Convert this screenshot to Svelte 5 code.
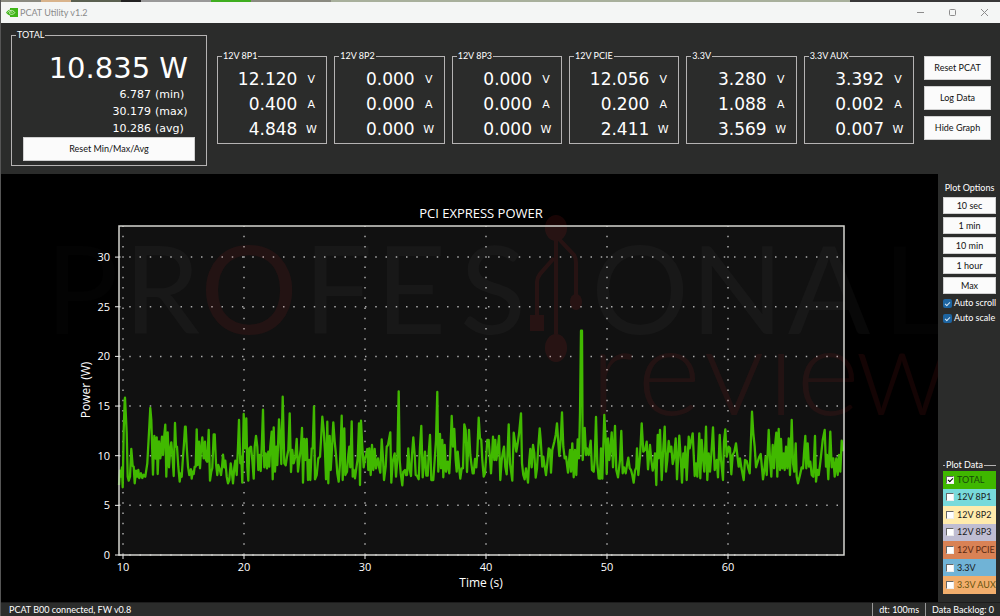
<script>
  const total = { now: '10.835', min: '6.787', max: '30.179', avg: '10.286' };

  const rails = [
    { name: '12V 8P1', volts: '12.120', amps: '0.400', watts: '4.848' },
    { name: '12V 8P2', volts: '0.000', amps: '0.000', watts: '0.000' },
    { name: '12V 8P3', volts: '0.000', amps: '0.000', watts: '0.000' },
    { name: '12V PCIE', volts: '12.056', amps: '0.200', watts: '2.411' },
    { name: '3.3V', volts: '3.280', amps: '1.088', watts: '3.569' },
    { name: '3.3V AUX', volts: '3.392', amps: '0.002', watts: '0.007' }
  ];

  const actions = ['Reset PCAT', 'Log Data', 'Hide Graph'];
  const ranges = ['10 sec', '1 min', '10 min', '1 hour', 'Max'];

  let autoScroll = $state(true);
  let autoScale = $state(true);

  let series = $state([
    { name: 'TOTAL', key: 'sum', on: true },
    { name: '12V 8P1', key: 'p1', on: false },
    { name: '12V 8P2', key: 'p2', on: false },
    { name: '12V 8P3', key: 'p3', on: false },
    { name: '12V PCIE', key: 'pcie', on: false },
    { name: '3.3V', key: 'v3', on: false },
    { name: '3.3V AUX', key: 'aux', on: false }
  ]);

  // axes
  const left = 119, right = 844, top = 52, bottom = 381;
  const xTicks = [10, 20, 30, 40, 50, 60].map((v) => ({ v, x: 123 + (v - 10) * 12.1 }));
  const yTicks = [0, 5, 10, 15, 20, 25, 30].map((v) => ({ v, y: bottom - v * 9.93 }));

  // readings come in blocks, three units to a pixel, each with its own start
  const blocks = [
    { start: 110, data: '27,315 30,272 33,290 36,262 38,322 41,150 44,60 45,53 47,95 50,160 53,290 56,302 60,290 64,207 68,258 71,260 74,310 78,272 82,290 85,270 88,294 93,280 97,294 101,284 106,290 112,250 118,140 121,84 124,120 129,284 133,168 137,236 140,172 143,282 147,184 151,235 156,170 159,225 163,165 166,134 169,290 173,157 177,262 181,205 184,187 188,240 191,288 195,129 198,200 201,200 205,260 209,305 212,280 215,290 219,230 222,190 225,140 227,140 230,200 234,260 238,285 243,268 245,296 248,275 251,282 254,260 257,260 260,148 263,255 267,185 270,265 273,210 277,172 281,235 285,185 288,240 292,245 296,150 300,302 304,275 307,265 311,163 314,163 318,250 322,285 325,255 329,268 333,285 336,262 339,224 343,262 346,242 350,290 354,310 358,300 362,250 366,280 369,310 373,262 376,242 380,285 384,200 387,120 391,250 394,230 397,308 401,102 405,205 409,115 412,260 415,302 418,205 423,200 427,240 431,296 434,200 438,168 442,200 445,270 449,225 452,273 456,180 459,89 463,262 467,220 471,265 475,215 478,260 481,200 485,155 488,298 491,142 495,275 499,200 502,255 507,118 511,180 514,252 518,50 523,250 527,256 531,230 535,210 539,100 543,276 547,210 551,250 556,230 560,177 564,275 568,240 572,210 576,144 579,308 583,177 586,240 590,177 594,300 598,240 601,300 605,205 608,205 612,79 615,298 620,285 625,235 630,230 633,180 637,110 641,150 645,215 648,298 652,125 655,310 659,168 662,270 666,205 670,127 674,185 678,225 682,280 686,305 690,250 695,107 698,300 703,145 706,285 711,275 715,225 718,200 721,262 725,124 728,290 731,270 735,295 739,265 743,235 747,130 750,315' },
    { start: 350, data: '33,122 37,200 41,262 45,235 48,225 52,207 55,270 58,205 62,285 66,195 70,270 74,207 78,265 84,235 88,265 91,278 95,178 99,235 102,300 107,260 110,200 114,195 121,157 124,308 128,245 134,220 138,290 142,240 146,34 149,240 152,280 157,316 160,275 165,270 168,285 171,285 175,205 179,270 183,288 186,225 190,172 194,225 197,285 201,287 206,298 210,200 214,138 218,292 225,215 229,287 233,287 236,220 240,165 244,300 250,300 254,240 258,180 262,36 265,275 270,162 273,265 277,180 280,292 284,195 288,275 293,245 298,280 301,220 305,108 309,200 313,147 317,240 320,275 323,215 327,260 331,296 335,265 339,265 343,133 347,150 351,276 357,150 361,225 364,250 368,280 371,280 375,237 379,262 382,220 386,113 390,175 394,180 397,240 401,290 405,280 409,225 412,180 416,180 419,225 423,280 429,170 433,240 436,180 439,240 442,220 447,168 451,300 455,240 459,215 462,200 466,260 470,283 476,133 480,250 487,302 491,158 495,185 499,215 503,190 507,162 513,100 516,250 520,285 524,298 528,265 534,308 538,240 541,207 545,262 549,195 553,220 557,293 561,265 565,200 569,145 572,180 577,260 580,230 584,260 588,285 592,250 596,205 600,210 603,278 607,210 613,185 617,165 621,130 624,175 628,228 632,180 636,97 640,200 644,235 648,230 654,278 660,210 663,275 667,190 671,292 675,210 679,285 683,178 687,235 690,100 693,-148 696,-148 698,240 704,144 708,225 711,205 716,225 722,182 726,270 731,275 734,240 738,111 742,250 746,295 750,296' },
    { start: 600, data: '3,205 7,296 10,200 13,105 17,180 20,282 24,175 28,240 31,210 35,157 39,262 45,138 49,270 54,292 60,240 64,153 68,280 72,262 77,280 81,255 85,233 89,265 93,270 97,285 101,308 105,272 109,262 111,205 115,285 120,230 125,130 130,215 135,210 140,185 144,268 150,195 154,240 158,272 162,255 165,220 169,315 173,165 176,235 180,150 185,300 189,220 194,140 198,275 202,240 206,183 210,215 214,200 218,252 222,235 227,175 231,298 238,167 243,250 246,308 250,220 253,262 256,200 260,300 266,170 269,205 273,185 278,160 284,288 288,250 292,290 298,160 301,295 305,180 309,235 313,275 318,140 322,300 326,220 330,275 334,225 339,142 344,270 350,240 354,292 359,165 363,240 369,300 372,185 376,148 380,230 386,200 390,205 394,283 398,225 403,215 408,190 412,225 416,260 420,235 424,262 431,300 435,240 440,243 445,265 449,280 452,200 456,95 460,160 464,200 468,262 473,245 478,230 482,222 485,255 489,298 493,270 497,230 500,285 506,150 510,235 514,290 518,195 522,265 526,190 529,158 532,290 536,147 540,270 543,177 547,265 551,220 554,270 558,200 562,265 566,175 570,285 575,120 579,250 583,275 587,190 590,290 594,310 600,285 605,262 609,265 612,220 616,168 619,265 623,190 627,260 631,245 635,285 640,290 645,168 648,305 652,270 656,285 660,255 664,220 668,180 674,150 678,260 681,225 685,298 691,155 695,262 700,235 704,290 709,235 713,285 717,225 721,275 725,182 729,210 732,210' }
  ];

  const trace = blocks
    .flatMap((b) => b.data.split(' ').map((pair) => {
      const [x, y] = pair.split(',').map(Number);
      return `${(b.start + x / 3).toFixed(1)},${(206 + y / 3).toFixed(1)}`;
    }))
    .join(' ');

  const brand = [
    ['P', 82], ['R', 162], ['O', 249], ['F', 338], ['E', 411], ['S', 493],
    ['O', 640], ['N', 737], ['A', 829], ['L', 914]
  ];
  const tagline = [['r', 612], ['e', 669], ['v', 734], ['ı', 781], ['e', 828], ['w', 902]];
</script>

<div class="window">
  <div class="desktop"></div>
  <header class="titlebar">
    <svg class="logo" viewBox="0 0 12 9" aria-hidden="true">
      <path d="M4 0h8v9H4z" fill="#3fb618" />
      <path d="M0 4.5C2 1.800 4 1 6 1.200 8 1.500 9.500 3 10.500 4.300 9 6.500 7.500 7.600 5.500 7.700 3 7.700 1.200 6.500 0 4.500z" fill="#3fb618" />
      <path d="M1.500 4.500C3 2.500 5 2 6.500 2.600 7.800 3.100 8.500 4 9 4.500 8 5.600 7 6.400 5.500 6.400 4 6.400 3.300 5.300 3.300 4.600 4 3.700 5.500 3.500 6.500 4.700" fill="none" stroke="#e8f7e0" stroke-width=".8" />
    </svg>
    <span class="title">PCAT Utility v1.2</span>
    <button aria-label="Minimize"><svg viewBox="0 0 9 9"><path d="M1 4.500h7" /></svg></button>
    <button aria-label="Maximize"><svg viewBox="0 0 9 9"><rect x="1.500" y="1.500" width="6" height="6" rx="1" /></svg></button>
    <button aria-label="Close"><svg viewBox="0 0 9 9"><path d="M1 1l7 7M8 1L1 8" /></svg></button>
  </header>

  <section class="readings">
    <fieldset class="total">
      <legend>TOTAL</legend>
      <div class="now">{total.now} W</div>
      <div class="stats">
        <span>{total.min}</span><span>(min)</span>
        <span>{total.max}</span><span>(max)</span>
        <span>{total.avg}</span><span>(avg)</span>
      </div>
      <button class="btn reset">Reset Min/Max/Avg</button>
    </fieldset>

    <div class="rails">
      {#each rails as rail}
        <fieldset class="rail">
          <legend>{rail.name}</legend>
          <div class="values">
            <span>{rail.volts}</span><small>V</small>
            <span>{rail.amps}</span><small>A</small>
            <span>{rail.watts}</span><small>W</small>
          </div>
        </fieldset>
      {/each}
    </div>

    <div class="actions">
      {#each actions as action}
        <button class="btn">{action}</button>
      {/each}
    </div>
  </section>

  <main>
    <div class="plot">
      <svg viewBox="1 0 937 428" role="img" aria-label="PCI Express power over time">
        <rect x={left} y={top} width={right - left} height={bottom - top} fill="#111" />

        <g class="grid">
          {#each xTicks as t}
            <line x1={t.x} x2={t.x} y1={bottom} y2={top} />
          {/each}
          {#each yTicks as t}
            <line x1={left} x2={right} y1={t.y} y2={t.y} />
          {/each}
        </g>

        <g class="watermark" aria-hidden="true">
          {#each brand as [letter, x], i}
            <text class:red={i === 2} class:faint={i === 0 || i === 9} {x} y="160" text-anchor="middle">{letter}</text>
          {/each}
          {#each tagline as [letter, x]}
            <text class="red light" {x} y="241" text-anchor="middle">{letter}</text>
          {/each}
          <g class="usb">
            <path d="M556 66v94M558 64l16 17q2 3 2 8v13M554 84l-14 16q-3 4-3 8v33" />
            <ellipse cx="556" cy="54" rx="11" ry="13" />
            <ellipse cx="556" cy="174" rx="11" ry="14" />
            <ellipse cx="576" cy="128" rx="6" ry="8" />
            <path d="M576 98v24" />
            <rect x="530" y="141" width="14" height="16" />
          </g>
        </g>

        {#if series[0].on}
          <polyline class="trace" points={trace} />
        {/if}

        <rect class="frame" x={left} y={top} width={right - left} height={bottom - top} />

        <g class="ticks">
          {#each xTicks as t}
            <line x1={t.x} x2={t.x} y1={bottom} y2={bottom + 4} />
            <text x={t.x} y={bottom + 16} text-anchor="middle">{t.v}</text>
          {/each}
          {#each yTicks as t}
            <line x1={left - 4} x2={left} y1={t.y} y2={t.y} />
            <text x={left - 9} y={t.y + 4} text-anchor="end">{t.v}</text>
          {/each}
        </g>

        <text class="heading" x="481" y="44" text-anchor="middle">PCI EXPRESS POWER</text>
        <text class="axis" x="481" y="413" text-anchor="middle">Time (s)</text>
        <text class="axis" transform="translate(90 216) rotate(-90)" text-anchor="middle">Power (W)</text>
      </svg>
    </div>

    <aside>
      <div class="options">
        <h2>Plot Options</h2>
        {#each ranges as range}
          <button class="btn">{range}</button>
        {/each}
        <label><input type="checkbox" bind:checked={autoScroll} />Auto scroll</label>
        <label><input type="checkbox" bind:checked={autoScale} />Auto scale</label>
      </div>

      <fieldset class="data">
        <legend>Plot Data</legend>
        <div class="series">
          {#each series as item}
            <label class={item.key}><input type="checkbox" bind:checked={item.on} />{item.name}</label>
          {/each}
        </div>
      </fieldset>
    </aside>
  </main>

  <footer>
    <span class="status">PCAT B00 connected, FW v0.8</span>
    <span class="cell">dt: 100ms</span>
    <span class="cell">Data Backlog: 0</span>
  </footer>
</div>

<style>
  :global(body) {
    background: #2b2c2b;
  }
  .window {
    box-sizing: border-box;
    display: flex;
    flex-direction: column;
    min-height: 100vh;
    border-left: 1px solid #555;
    background: #2b2c2b;
    color: #fff;
    font-family: Lato, "Open Sans", sans-serif;
    font-size: 9px;
    line-height: 12px;
  }
  .desktop {
    height: 2px;
    background: linear-gradient(90deg, #8a8a80 0 4%, #d9b48c 4% 7%, #5a6050 7% 12%, #222 12% 14%, #999 14% 21%, #3fae20 21% 25%, #8a8a80 25% 33%, #a8b09c 33% 85%, #383838 85%);
  }
  button {
    font: inherit;
    padding: 0;
    cursor: pointer;
  }
  fieldset {
    box-sizing: border-box;
    min-width: 0;
    margin: 0;
    border: 1px solid #b5b3b3;
  }
  legend {
    padding: 0 1px;
    line-height: 12px;
  }
  .btn {
    border: 1px solid #d0d0d0;
    background: #fbfbfb;
    color: #111;
  }

  .titlebar {
    display: flex;
    align-items: center;
    height: 21px;
    padding-left: 5px;
    background: #f4f6f5;
    color: #8b8b8b;
  }
  .logo {
    width: 12px;
    height: 9px;
    margin-right: 2px;
  }
  .title {
    flex: 1;
  }
  .titlebar button {
    display: flex;
    align-items: center;
    justify-content: center;
    width: 32px;
    height: 20px;
    border: 0;
    background: none;
  }
  .titlebar button svg {
    width: 9px;
    height: 9px;
    fill: none;
    stroke: #8c8c8c;
  }

  .readings {
    display: flex;
    align-items: flex-start;
    gap: 10px;
    padding: 6px 9px 8px 10px;
  }
  .total {
    width: 196px;
    height: 137px;
    padding: 0 11px;
  }
  .total legend {
    margin-left: -7px;
  }
  .now, .stats, .values {
    font-family: "DejaVu Sans", Verdana, sans-serif;
  }
  .now {
    padding-right: 7px;
    font-size: 29px;
    line-height: 36px;
    margin-top: 9px;
    text-align: right;
  }
  .stats {
    display: grid;
    grid-template-columns: 1fr 36px;
    column-gap: 4px;
    padding-right: 4px;
    font-size: 11px;
    line-height: 17px;
  }
  .stats span:nth-child(odd) {
    text-align: right;
  }
  .reset {
    width: 100%;
    height: 24px;
  }
  .rails {
    display: flex;
    flex: 1;
    gap: 7px;
    padding-top: 21px;
  }
  .rail {
    flex: 1;
    height: 94px;
    padding: 0 1px 0 4px;
  }
  .values {
    display: grid;
    grid-template-columns: 1fr 28px;
    align-items: center;
    padding-top: 5px;
    font-size: 17px;
    line-height: 25px;
    text-align: right;
  }
  .values small {
    font-size: 11px;
    text-align: center;
  }
  .actions {
    display: flex;
    flex-direction: column;
    gap: 6px;
    width: 67px;
    padding-top: 27px;
  }
  .actions .btn {
    height: 24px;
  }

  main {
    display: flex;
    flex: 1;
  }
  .plot {
    flex: 1;
    min-width: 0;
    background: #000;
    font-family: "Open Sans", "Noto Sans", sans-serif;
  }
  .plot > svg {
    display: block;
    width: 100%;
  }
  .grid line {
    stroke: #aaa;
    stroke-width: 1.5;
    stroke-dasharray: 1.5 8.75;
  }
  .frame {
    fill: none;
    stroke: #d5d5d0;
    stroke-width: 1.5;
  }
  .trace {
    fill: none;
    stroke: #41b900;
    stroke-width: 2.3;
    stroke-linejoin: round;
  }
  .ticks line {
    stroke: #eee;
  }
  .ticks text {
    fill: #fff;
    font-size: 11px;
  }
  .heading {
    fill: #fff;
    font-size: 13px;
  }
  .axis {
    fill: #fff;
    font-size: 12px;
  }
  .watermark text {
    fill: rgba(255, 255, 255, 0.03);
    font-family: Lato, sans-serif;
    font-size: 122px;
  }
  .watermark .faint {
    fill: rgba(255, 255, 255, 0.01);
  }
  .watermark .red {
    fill: rgba(220, 40, 40, 0.09);
  }
  .watermark .light {
    font-weight: 300;
  }
  .usb {
    fill: #dc2828;
    opacity: 0.11;
  }
  .usb path {
    fill: none;
    stroke: #dc2828;
    stroke-width: 4;
  }

  aside {
    display: flex;
    flex-direction: column;
    justify-content: space-between;
    width: 53px;
    padding: 8px 4px 8px 5px;
  }
  .options {
    display: flex;
    flex-direction: column;
    gap: 3px;
  }
  .options .btn {
    height: 17px;
  }
  h2 {
    margin: 0;
    font-size: 9px;
    font-weight: 400;
    line-height: 12px;
    text-align: center;
    white-space: nowrap;
  }
  label {
    display: flex;
    align-items: center;
    gap: 2px;
    white-space: nowrap;
  }
  input {
    appearance: none;
    flex: none;
    display: grid;
    place-items: center;
    width: 9px;
    height: 9px;
    margin: 0;
    border-radius: 2px;
    background: #1d64a0;
  }
  input:checked::after {
    content: '';
    width: 4px;
    height: 2px;
    border: solid #cfe3f3;
    border-width: 0 0 1px 1px;
    transform: rotate(-45deg);
  }
  .data {
    padding: 0;
    border-width: 1px 0 0;
  }
  .data legend {
    margin-left: 2px;
  }
  .series {
    display: grid;
    grid-template-columns: minmax(0, 1fr);
    grid-auto-rows: 1fr;
    height: 123px;
  }
  .series label {
    padding-left: 3px;
    gap: 3px;
    color: #1b1b1b;
  }
  .series input {
    width: 8px;
    height: 8px;
    border: 1px solid #777;
    border-color: #666 #eee #eee #666;
    border-radius: 0;
    background: #fff;
    box-sizing: border-box;
  }
  .series input:checked::after {
    border-color: #000;
  }
  .series .sum { background: #3fb700; color: #17480a; }
  .series .p1 { background: #78dadb; }
  .series .p2 { background: #ffebac; }
  .series .p3 { background: #bfbdd2; }
  .series .pcie { background: #d98255; color: #5c2a12; }
  .series .v3 { background: #70b3d6; }
  .series .aux { background: #f2ae6c; color: #67530c; }

  footer {
    display: flex;
    height: 14px;
    border-top: 1px solid #1c1c1c;
    box-sizing: border-box;
    line-height: 13px;
  }
  .status {
    flex: 1;
    padding-left: 8px;
  }
  .cell {
    padding: 0 6px;
    border-left: 1px solid #999;
  }
</style>
